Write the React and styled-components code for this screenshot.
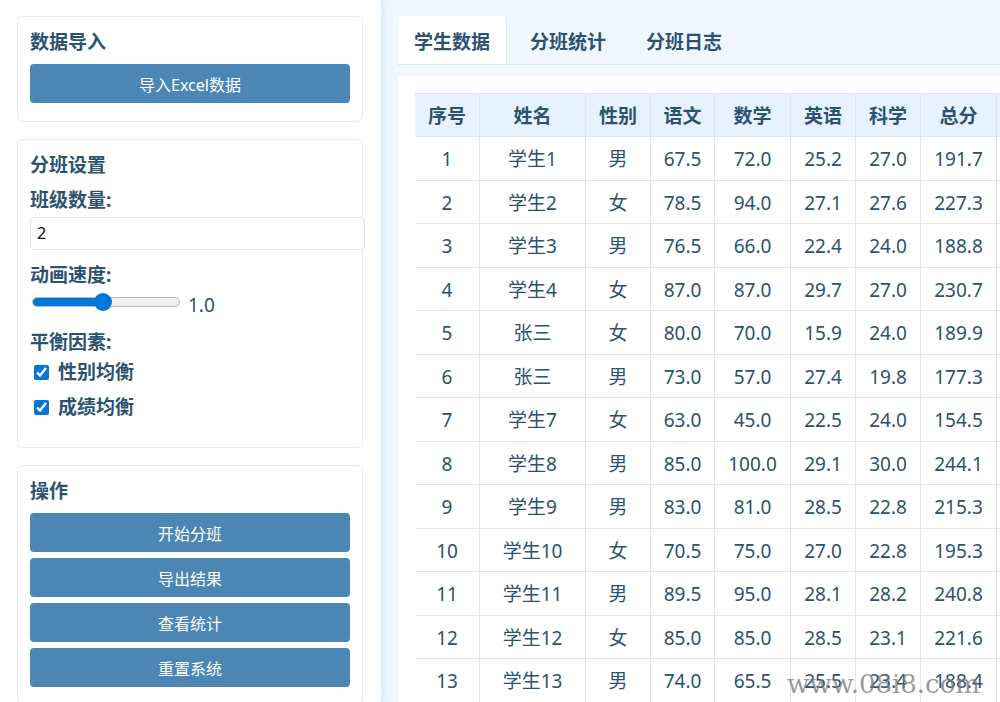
import React, { useState } from 'react';
import styled, { createGlobalStyle, css } from 'styled-components';

const TABS = ['学生数据', '分班统计', '分班日志'];

const COLUMNS = [
  { title: '序号', width: 65 },
  { title: '姓名', width: 106 },
  { title: '性别', width: 65 },
  { title: '语文', width: 64 },
  { title: '数学', width: 76 },
  { title: '英语', width: 65 },
  { title: '科学', width: 65 },
  { title: '总分', width: 76 },
];

const STUDENTS = [
  ['1', '学生1', '男', '67.5', '72.0', '25.2', '27.0', '191.7'],
  ['2', '学生2', '女', '78.5', '94.0', '27.1', '27.6', '227.3'],
  ['3', '学生3', '男', '76.5', '66.0', '22.4', '24.0', '188.8'],
  ['4', '学生4', '女', '87.0', '87.0', '29.7', '27.0', '230.7'],
  ['5', '张三', '女', '80.0', '70.0', '15.9', '24.0', '189.9'],
  ['6', '张三', '男', '73.0', '57.0', '27.4', '19.8', '177.3'],
  ['7', '学生7', '女', '63.0', '45.0', '22.5', '24.0', '154.5'],
  ['8', '学生8', '男', '85.0', '100.0', '29.1', '30.0', '244.1'],
  ['9', '学生9', '男', '83.0', '81.0', '28.5', '22.8', '215.3'],
  ['10', '学生10', '女', '70.5', '75.0', '27.0', '22.8', '195.3'],
  ['11', '学生11', '男', '89.5', '95.0', '28.1', '28.2', '240.8'],
  ['12', '学生12', '女', '85.0', '85.0', '28.5', '23.1', '221.6'],
  ['13', '学生13', '男', '74.0', '65.5', '25.5', '23.4', '188.4'],
];

export default function App() {
  const [activeTab, setActiveTab] = useState(TABS[0]);
  const [classCount, setClassCount] = useState('2');
  const [speed, setSpeed] = useState(1);

  return (
    <>
      <GlobalStyle />
      <Page>
        <Sidebar>
          <Section>
            <SectionTitle>数据导入</SectionTitle>
            <Button type="button">导入Excel数据</Button>
          </Section>

          <Section>
            <SectionTitle>分班设置</SectionTitle>
            <Field>
              <Label htmlFor="class-count">班级数量:</Label>
              <TextInput
                id="class-count"
                value={classCount}
                onChange={e => setClassCount(e.target.value)}
              />
            </Field>
            <Field>
              <Label htmlFor="speed">动画速度:</Label>
              <SliderRow>
                <Slider
                  id="speed"
                  type="range"
                  min="0.1"
                  max="2"
                  step="0.1"
                  value={speed}
                  style={{ '--fill': `${((speed - 0.1) / 1.9) * 100}%` }}
                  onChange={e => setSpeed(Number(e.target.value))}
                />
                <output htmlFor="speed">{speed.toFixed(1)}</output>
              </SliderRow>
            </Field>
            <Factors>
              <Legend>平衡因素:</Legend>
              <CheckLabel>
                <Checkbox type="checkbox" defaultChecked />
                性别均衡
              </CheckLabel>
              <CheckLabel>
                <Checkbox type="checkbox" defaultChecked />
                成绩均衡
              </CheckLabel>
            </Factors>
          </Section>

          <Section>
            <SectionTitle>操作</SectionTitle>
            <Button type="button">开始分班</Button>
            <Button type="button">导出结果</Button>
            <Button type="button">查看统计</Button>
            <Button type="button">重置系统</Button>
          </Section>
        </Sidebar>

        <Main>
          <TabBar>
            {TABS.map(tab => (
              <Tab
                key={tab}
                type="button"
                $active={tab === activeTab}
                onClick={() => setActiveTab(tab)}
              >
                {tab}
              </Tab>
            ))}
          </TabBar>
          <Panel>
            <Table>
              <colgroup>
                {COLUMNS.map(column => (
                  <Col key={column.title} $width={column.width} />
                ))}
                <col />
              </colgroup>
              <thead>
                <tr>
                  {COLUMNS.map(column => (
                    <Th key={column.title}>{column.title}</Th>
                  ))}
                  <Th as="td" />
                </tr>
              </thead>
              <tbody>
                {STUDENTS.map(student => (
                  <Row key={student[0]}>
                    {student.map((value, i) => (
                      <Td key={COLUMNS[i].title}>{value}</Td>
                    ))}
                    <Td />
                  </Row>
                ))}
              </tbody>
            </Table>
          </Panel>
        </Main>
        <Watermark>www.08i8.com</Watermark>
      </Page>
    </>
  );
}

const GlobalStyle = createGlobalStyle`
  *, *::before, *::after {
    box-sizing: border-box;
  }

  body {
    margin: 0;
    background: #f0f7ff;
    color: #2c5270;
    font-family: 'Noto Sans', 'Noto Sans CJK SC', sans-serif;
    font-size: 19px;
    line-height: 27px;
  }

  button, input {
    font-family: inherit;
  }
`;

const Page = styled.div`
  position: relative;
  display: flex;
  height: 100vh;
  overflow: hidden;
`;

const Sidebar = styled.aside`
  flex: 0 0 381px;
  padding: 16px 18px 16px 17px;
  background: #fff;
  box-shadow: 2px 0 10px rgba(44, 82, 112, 0.12);
  z-index: 1;
`;

const Section = styled.section`
  margin-bottom: 17px;
  padding: 12px;
  border: 1px solid #e8ebee;
  border-radius: 6px;
`;

const SectionTitle = styled.h3`
  margin: 0 0 8px;
  font-size: 19px;
  font-weight: 700;
`;

const Button = styled.button`
  display: block;
  width: 100%;
  height: 39px;
  margin-bottom: 6px;
  border: 0;
  border-radius: 4px;
  background: #4b86b4;
  color: #fff;
  font-size: 16px;
  cursor: pointer;
`;

const Field = styled.div`
  margin-bottom: 12px;
`;

const Label = styled.label`
  display: block;
  margin-bottom: 3px;
  font-weight: 700;
`;

const TextInput = styled.input`
  box-sizing: content-box;
  display: block;
  width: 100%;
  height: 29px;
  padding: 0 7px 2px 6px;
  border: 1px solid #e2e5e8;
  border-radius: 4px;
  background: #fff;
  color: #000;
  font-size: 16px;
`;

const SliderRow = styled.div`
  display: flex;
  align-items: flex-start;
  gap: 8px;
  height: 25px;
`;

const thumb = css`
  width: 18px;
  height: 18px;
  border: 0;
  border-radius: 50%;
  background: #0078d7;
`;

const Slider = styled.input`
  appearance: none;
  width: 148px;
  height: 10px;
  margin: 5px 0 0 2px;
  border: 1px solid #b9b9b9;
  border-radius: 5px;
  background: linear-gradient(#0078d7, #0078d7) 0 0 / var(--fill) 100% no-repeat
    border-box #efefef;

  &::-webkit-slider-thumb {
    appearance: none;
    ${thumb}
  }

  &::-moz-range-thumb {
    ${thumb}
  }
`;

const Factors = styled.fieldset`
  margin: 0;
  padding: 0 0 6px;
  border: 0;
`;

const Legend = styled.legend`
  margin-bottom: 3px;
  padding: 0;
  font-weight: 700;
`;

const CheckLabel = styled.label`
  display: flex;
  align-items: center;
  gap: 9px;
  margin-bottom: 8px;
  padding-left: 4px;
  font-weight: 700;
`;

const Checkbox = styled.input`
  width: 15px;
  height: 15px;
  margin: 0;
  accent-color: #0078d7;
`;

const Main = styled.main`
  flex: 1;
  min-width: 0;
  padding: 16px 0 0 17px;
`;

const TabBar = styled.nav`
  display: flex;
  gap: 8px;
  margin-bottom: 11px;
  border-bottom: 1px solid #e2e6ea;
`;

const Tab = styled.button`
  height: 48px;
  padding: 2px 16px 0;
  border: 0;
  border-radius: 5px 5px 0 0;
  background: ${({ $active }) => ($active ? '#fff' : 'transparent')};
  box-shadow: ${({ $active }) => ($active ? '1px 0 0 #e2e6ea' : 'none')};
  color: inherit;
  font-size: 19px;
  font-weight: 700;
  cursor: pointer;
`;

const Panel = styled.div`
  padding: 17px 0 17px 17px;
  background: #fff;
`;

const Table = styled.table`
  width: 100%;
  table-layout: fixed;
  border-collapse: separate;
  border-spacing: 0;
`;

const Col = styled.col`
  width: ${({ $width }) => $width}px;
`;

const cellStyles = css`
  height: 43px;
  padding: 2px 0 0;
  border-right: 1px solid #e3e5e7;
  border-bottom: 1px solid #e3e5e7;
  text-align: center;
  white-space: nowrap;

  &:last-child {
    border-right: 0;
  }
`;

const Th = styled.th`
  ${cellStyles}
  height: 44px;
  padding-top: 3px;
  border-top: 1px solid #e3e5e7;
  background: #e6f2ff;
  font-weight: 700;
`;

const Td = styled.td`
  ${cellStyles}
`;

const Row = styled.tr`
  &:nth-child(odd) > td {
    height: 44px;
  }
`;

const Watermark = styled.div`
  position: absolute;
  right: 20px;
  bottom: 4px;
  z-index: 2;
  color: rgba(120, 120, 120, 0.75);
  font-family: 'DejaVu Serif', serif;
  font-size: 26px;
  pointer-events: none;
`;
